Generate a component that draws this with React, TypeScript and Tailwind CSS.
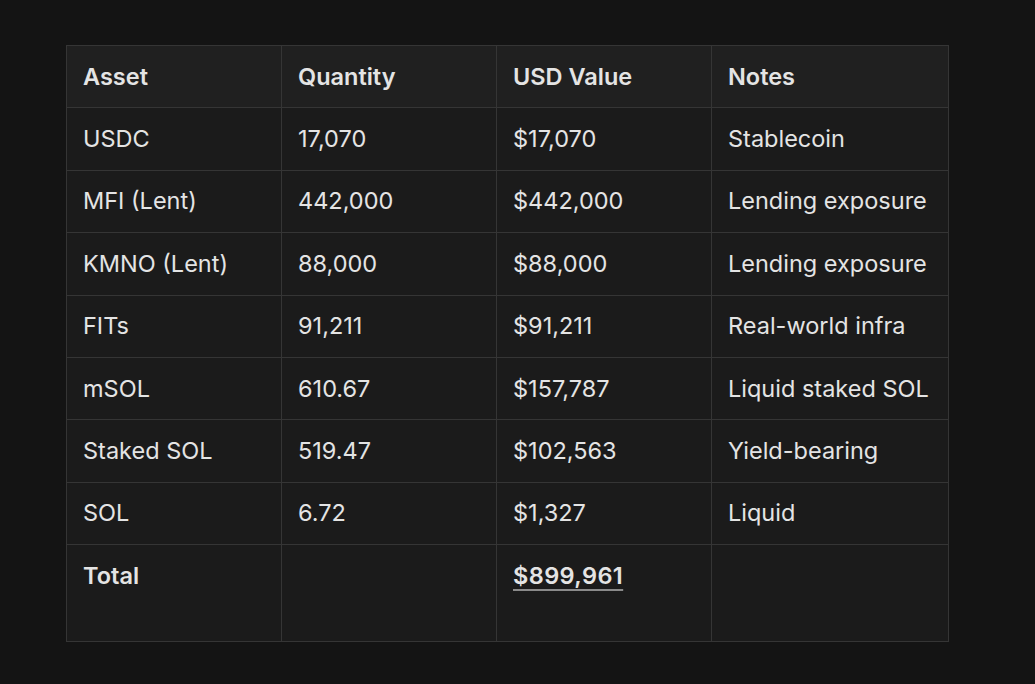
import React from "react";

const rows = [
  ["USDC", "17,070", "$17,070", "Stablecoin"],
  ["MFI (Lent)", "442,000", "$442,000", "Lending exposure"],
  ["KMNO (Lent)", "88,000", "$88,000", "Lending exposure"],
  ["FITs", "91,211", "$91,211", "Real-world infra"],
  ["mSOL", "610.67", "$157,787", "Liquid staked SOL"],
  ["Staked SOL", "519.47", "$102,563", "Yield-bearing"],
  ["SOL", "6.72", "$1,327", "Liquid"],
];

export default function App() {
  const cell = "border border-[#353535] px-[16px] h-[62.4px] align-middle leading-[28px]";
  return (
    <div
      className="w-[1035px] h-[684px] bg-[#141414] pt-[45px] pl-[66px] text-[#e4e4e4] text-[23.5px]"
      style={{ fontFamily: "Inter, 'Liberation Sans', sans-serif" }}
    >
      <table className="border-collapse w-[882px] table-fixed bg-[#1b1b1b]">
        <colgroup>
          <col className="w-[215px]" />
          <col className="w-[215px]" />
          <col className="w-[215px]" />
          <col className="w-[237px]" />
        </colgroup>
        <thead>
          <tr className="bg-[#202020]">
            {["Asset", "Quantity", "USD Value", "Notes"].map((h) => (
              <th key={h} className={`${cell} text-left font-semibold`}>
                {h}
              </th>
            ))}
          </tr>
        </thead>
        <tbody>
          {rows.map((r) => (
            <tr key={r[0]}>
              {r.map((c, i) => (
                <td key={i} className={cell}>
                  {c}
                </td>
              ))}
            </tr>
          ))}
          <tr>
            <td className="border border-[#353535] px-[16px] h-[97px] align-top pt-[17px] leading-[28px] font-semibold">Total</td>
            <td className="border border-[#353535] h-[97px]"></td>
            <td className="border border-[#353535] px-[16px] h-[97px] align-top pt-[17px] leading-[28px] font-semibold">
              <span className="underline decoration-[#8a8a8a] underline-offset-[5px] decoration-[1.5px] tracking-[0.4px]">$899,961</span>
            </td>
            <td className="border border-[#353535] h-[97px]"></td>
          </tr>
        </tbody>
      </table>
    </div>
  );
}
